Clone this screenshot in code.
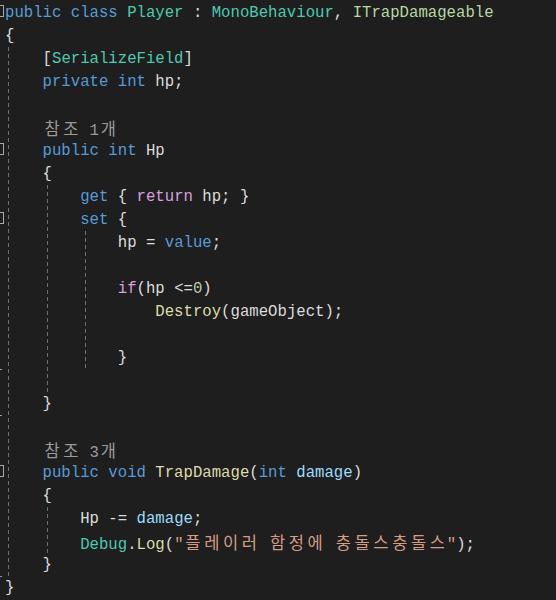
import React from "react";

const KW = "#569cd6";
const TYPE = "#4ec9b0";
const IFACE = "#b8d7a3";
const PLAIN = "#dcdcdc";
const LENS = "#9a9a9a";
const CTRL = "#d8a0df";
const NUM = "#b5cea8";
const FN = "#dcdcaa";
const PARAM = "#9cdcfe";
const STR = "#d69d85";

type Seg = [string, string];

const lines: Seg[][] = [
  [["public class ", KW], ["Player", TYPE], [" : ", PLAIN], ["MonoBehaviour", TYPE], [", ", PLAIN], ["ITrapDamageable", IFACE]],
  [["{", PLAIN]],
  [["    [", PLAIN], ["SerializeField", TYPE], ["]", PLAIN]],
  [["    private int ", KW], ["hp;", PLAIN]],
  [],
  [["    참조 1개", LENS]],
  [["    public int ", KW], ["Hp", PLAIN]],
  [["    {", PLAIN]],
  [["        get", KW], [" { ", PLAIN], ["return", CTRL], [" hp; }", PLAIN]],
  [["        set", KW], [" {", PLAIN]],
  [["            hp = ", PLAIN], ["value", KW], [";", PLAIN]],
  [],
  [["            ", PLAIN], ["if", CTRL], ["(hp <=", PLAIN], ["0", NUM], [")", PLAIN]],
  [["                ", PLAIN], ["Destroy", FN], ["(gameObject);", PLAIN]],
  [],
  [["            }", PLAIN]],
  [],
  [["    }", PLAIN]],
  [],
  [["    참조 3개", LENS]],
  [["    public void ", KW], ["TrapDamage", FN], ["(", PLAIN], ["int", KW], [" ", PLAIN], ["damage", PARAM], [")", PLAIN]],
  [["    {", PLAIN]],
  [["        Hp -= ", PLAIN], ["damage", PARAM], [";", PLAIN]],
  [["        ", PLAIN], ["Debug", TYPE], [".", PLAIN], ["Log", FN], ["(", PLAIN], ["\"플레이러 함정에 충돌스충돌스\"", STR], [");", PLAIN]],
  [["    }", PLAIN]],
  [["}", PLAIN]],
];

// lines (1-based) with a collapse box / block-end tick in the outlining margin
const boxes = [1, 7, 10, 21];
const ticks = [17, 19, 26];

const isHangul = (c: string) => /[\uac00-\ud7a3]/.test(c);

const Text = ({ text, color }: { text: string; color: string }) => {
  const parts: React.ReactNode[] = [];
  let buf = "";
  Array.from(text).forEach((c, i) => {
    if (isHangul(c)) {
      if (buf) parts.push(<span key={"t" + i}>{buf}</span>);
      buf = "";
      parts.push(
        <span
          key={"h" + i}
          className="inline-block w-[18.8px] text-center font-['Noto_Sans_CJK_KR',sans-serif] text-[16.5px]"
        >
          {c}
        </span>
      );
    } else {
      buf += c;
    }
  });
  if (buf) parts.push(<span key="end">{buf}</span>);
  return <span style={{ color }}>{parts}</span>;
};

const dash =
  "absolute w-px bg-[repeating-linear-gradient(to_bottom,#6e6e6e_0_4px,transparent_4px_7px)]";

export default function App() {
  return (
    <div className="relative w-[556px] h-[600px] overflow-hidden bg-[#1e1e1e] pt-px font-['Liberation_Mono',monospace] text-[15.67px]">
      {/* indent guides */}
      <div className={`${dash} left-[8px] top-[47px] h-[529px]`} />
      <div className={`${dash} left-[47px] top-[185px] h-[207px]`} />
      <div className={`${dash} left-[85px] top-[231px] h-[138px]`} />
      <div className={`${dash} left-[47px] top-[507px] h-[46px]`} />

      {lines.map((segs, i) => (
        <div key={i} className="relative h-[23px] pl-[5px] pt-px leading-[22px] whitespace-pre">
          {boxes.includes(i + 1) && (
            <span className="absolute left-[-2px] top-[4px] h-[12px] w-[6px] border border-[#a8a8a8]" />
          )}
          {ticks.includes(i + 1) && (
            <span className="absolute left-0 top-0 h-px w-[2px] bg-[#9a9a9a]" />
          )}
          {segs.map(([t, c], j) => (
            <Text key={j} text={t} color={c} />
          ))}
        </div>
      ))}
    </div>
  );
}
